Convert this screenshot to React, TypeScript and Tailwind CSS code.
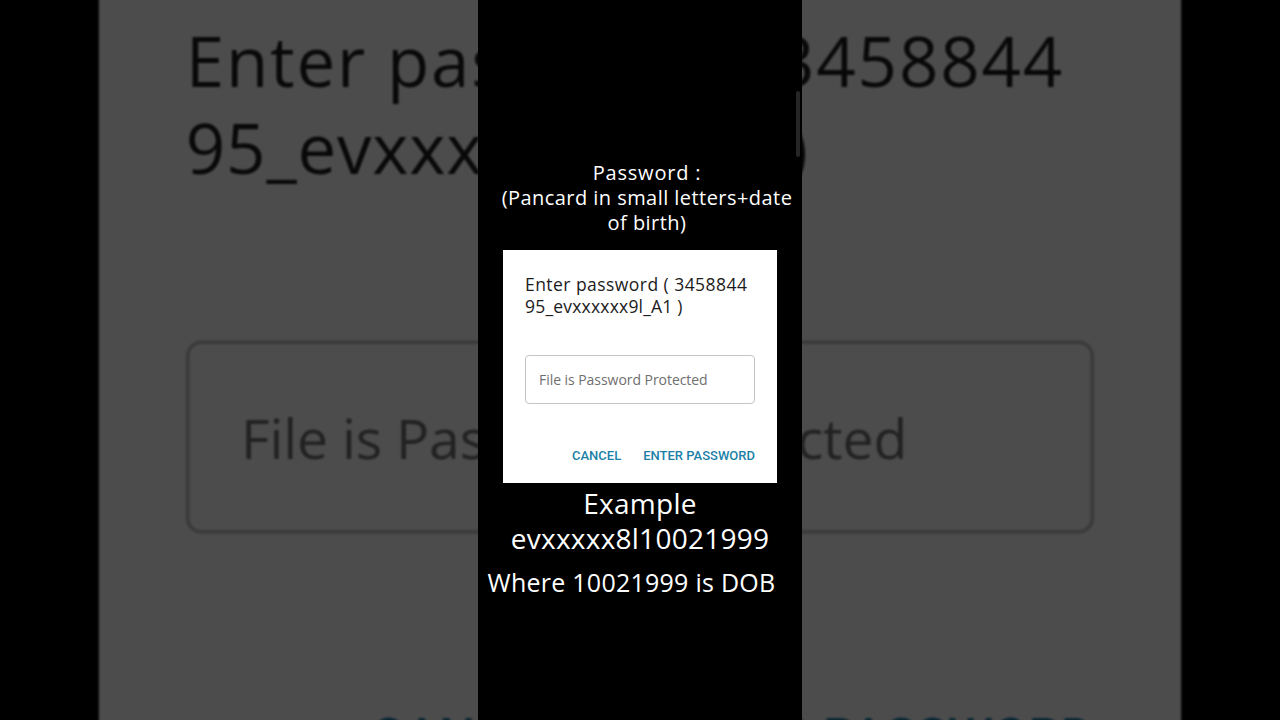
import React from 'react';

const SANS = "font-['Open_Sans','Noto_Sans',sans-serif]";

function PasswordDialog() {
  return (
    <div className={`w-[274px] h-[233px] bg-white flex flex-col px-[22px] pt-[23px] ${SANS}`}>
      <p className="text-[17.5px] leading-[22px] text-[#1c1c1c] tracking-[0.45px] whitespace-nowrap">
        Enter password ( 3458844
        <br />
        <span className="tracking-[0.2px]">95_evxxxxxx9l_A1 )</span>
      </p>
      <div className="mt-[38px] h-[49px] w-full border border-[#c4c4c4] rounded-[4px] flex items-center pl-[13px]">
        <span className="text-[14px] text-[#6f6f6f] tracking-[-0.05px]">File is Password Protected</span>
      </div>
      <div className="mt-[44px] flex justify-end gap-[22px] font-['Roboto',sans-serif] font-medium text-[13px] leading-[16px] text-[#1c7fa8]">
        <span>CANCEL</span>
        <span>ENTER PASSWORD</span>
      </div>
    </div>
  );
}

export default function App() {
  return (
    <div className="relative w-[1280px] h-[720px] bg-black overflow-hidden">
      {/* blurred, zoomed backdrop of the same frame */}
      <div className="absolute left-[503px] top-[250px] origin-[137px_110px] scale-[3.95] brightness-30 blur-[0.25px]">
        <PasswordDialog />
      </div>

      <div className="absolute left-[478px] top-0 w-[324px] h-[720px] bg-black flex flex-col items-center text-white">
        <div className={`pt-[160px] ml-[14px] text-center text-[20px] leading-[25px] tracking-[0.45px] whitespace-nowrap ${SANS}`}>
          <p className="tracking-[0.8px]">Password :</p>
          <p>(Pancard in small letters+date</p>
          <p>of birth)</p>
        </div>
        <div className="mt-[15px]">
          <PasswordDialog />
        </div>
        <div className={`mt-[3px] text-center text-[28px] leading-[35px] tracking-[0.25px] ${SANS}`}>
          <p>Example</p>
          <p>evxxxxx8l10021999</p>
        </div>
        <p className={`mt-[10px] mr-[17px] text-center text-[25px] leading-[32px] tracking-[0.25px] whitespace-nowrap ${SANS}`}>
          Where 10021999 is DOB
        </p>
      </div>

      {/* faint edge handle of the frame */}
      <div className="absolute left-[796px] top-[91px] w-[4px] h-[66px] rounded-full bg-[#262626]" />
    </div>
  );
}
